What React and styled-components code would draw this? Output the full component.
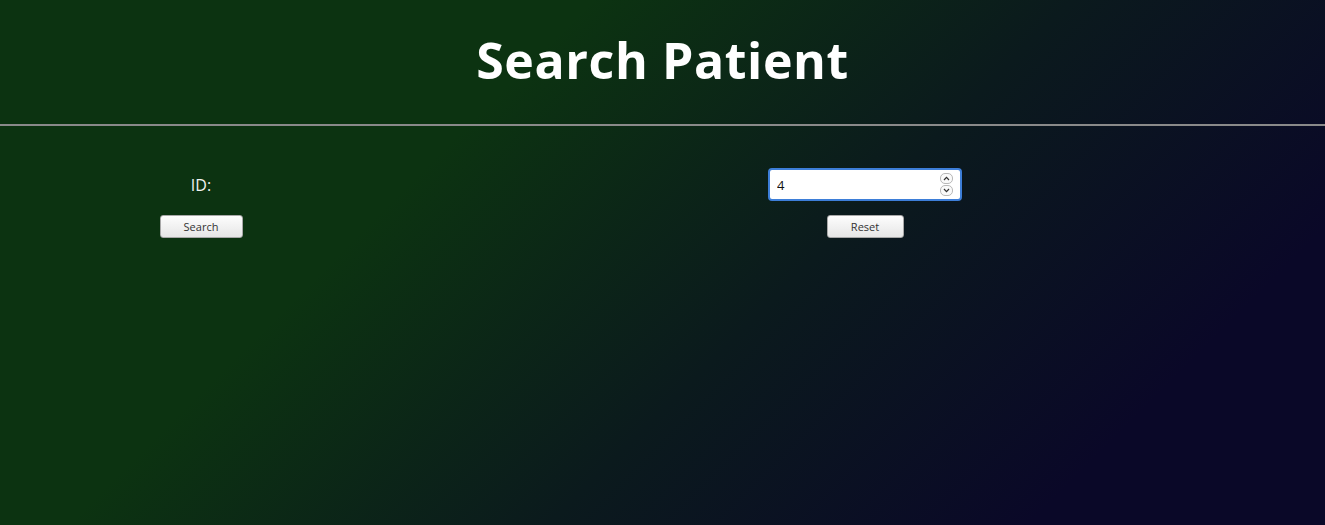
import { useState } from "react";
import styled, { createGlobalStyle } from "styled-components";

const GlobalStyle = createGlobalStyle`
  html, body {
    margin: 0;
    padding: 0;
    height: 100%;
  }

  body {
    font-family: "Open Sans", "DejaVu Sans", sans-serif;
    background: linear-gradient(135deg, #0c3311 32%, #0b1a1d 58%, #0a0828 84%);
    background-attachment: fixed;
    min-height: 100vh;
    color: #fff;
  }
`;

const Page = styled.div`
  min-height: 100vh;
`;

const Header = styled.header`
  height: 124px;
  display: flex;
  justify-content: center;
  align-items: flex-start;
  border-bottom: 2px solid #8a8a8a;
`;

const Title = styled.h1`
  margin: 26px 0 0;
  font-size: 50px;
  font-weight: 700;
  letter-spacing: 0.6px;
  color: #fff;
`;

const Form = styled.form`
  display: grid;
  grid-template-columns: 402px 926px;
  row-gap: 14px;
  padding-top: 42px;
`;

const Cell = styled.div`
  display: flex;
  justify-content: center;
  align-items: center;
  height: ${({ $h }) => $h || "auto"};
`;

const Label = styled.label`
  font-family: "Open Sans", sans-serif;
  font-size: 16px;
  color: #f2f2f2;
`;

const InputWrap = styled.div`
  position: relative;
  width: 194px;
  height: 33px;
`;

const NumberInput = styled.input`
  box-sizing: border-box;
  width: 100%;
  height: 100%;
  border: 2px solid #3d7ed8;
  border-radius: 4px;
  padding: 0 30px 0 7px;
  font-family: "Open Sans", sans-serif;
  font-size: 13px;
  color: #111;
  background: #fff;
  outline: none;

  &::-webkit-inner-spin-button,
  &::-webkit-outer-spin-button {
    -webkit-appearance: none;
    margin: 0;
  }
`;

const Spinner = styled.div`
  position: absolute;
  right: 9px;
  top: 5px;
  display: flex;
  flex-direction: column;
  gap: 1px;
`;

const SpinButton = styled.span`
  width: 13px;
  height: 11px;
  box-sizing: border-box;
  border: 1px solid #b8b8b8;
  border-radius: 5px;
  background: #fafafa;
  display: grid;
  place-items: center;

  svg {
    display: block;
  }
`;

const Button = styled.button`
  width: ${({ $w }) => $w};
  height: 23px;
  border: 1px solid #a8a8a8;
  border-radius: 3px;
  background: linear-gradient(#fdfdfd, #e6e6e6);
  font-family: "Open Sans", sans-serif;
  font-size: 11px;
  color: #333;
  padding: 0;
  cursor: pointer;
`;

const Chevron = ({ up }) => (
  <svg width="7" height="5" viewBox="0 0 7 5">
    <path
      d={up ? "M1 4 L3.5 1.3 L6 4" : "M1 1 L3.5 3.7 L6 1"}
      fill="none"
      stroke="#333"
      strokeWidth="1.2"
    />
  </svg>
);

export default function App() {
  const [id, setId] = useState("4");

  return (
    <Page>
      <GlobalStyle />
      <Header>
        <Title>Search Patient</Title>
      </Header>
      <Form onSubmit={e => e.preventDefault()}>
        <Cell $h="33px">
          <Label htmlFor="pid">ID:</Label>
        </Cell>
        <Cell $h="33px">
          <InputWrap>
            <NumberInput
              id="pid"
              type="number"
              value={id}
              autoFocus
              onChange={e => setId(e.target.value)}
            />
            <Spinner>
              <SpinButton>
                <Chevron up />
              </SpinButton>
              <SpinButton>
                <Chevron />
              </SpinButton>
            </Spinner>
          </InputWrap>
        </Cell>
        <Cell>
          <Button type="submit" $w="83px">Search</Button>
        </Cell>
        <Cell>
          <Button type="button" $w="77px" onClick={() => setId("")}>
            Reset
          </Button>
        </Cell>
      </Form>
    </Page>
  );
}
